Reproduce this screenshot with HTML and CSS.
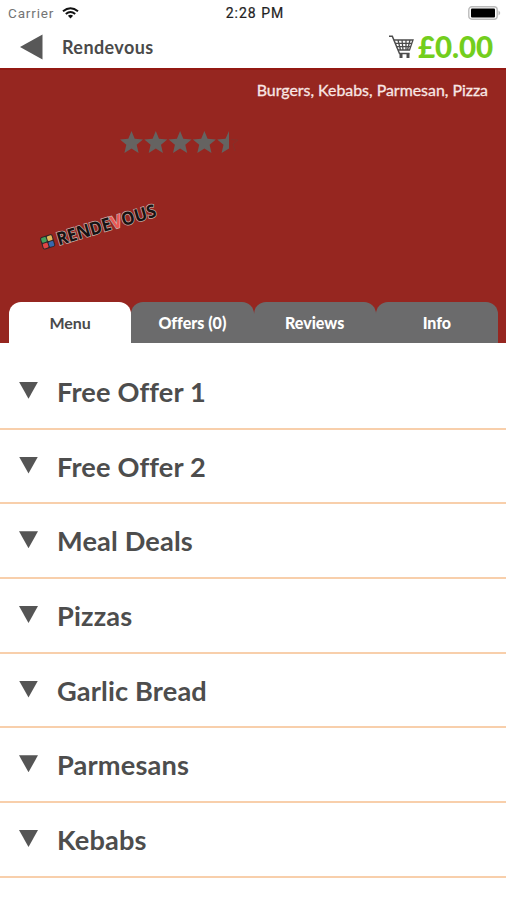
FILE: index.html
```html
<!DOCTYPE html>
<html lang="en">
<head>
<meta charset="utf-8">
<title>Rendevous</title>
<link rel="stylesheet" href="styles.css">
</head>
<body>
<div class="status">
  <div class="carrier"><span>Carrier</span>
    <svg class="wifi" width="17" height="12" viewBox="0 0 17 12"><g fill="none" stroke="#111" stroke-width="2"><path d="M1 4.3Q8.500-1.900 16 4.300"/><path d="M3.800 7Q8.500 3 13.200 7"/></g><path d="M8.500 11.600L5.900 8.800Q8.500 6.900 11.100 8.800Z" fill="#111"/></svg>
  </div>
  <time class="clock">2:28 PM</time>
  <svg class="battery" width="33" height="14" viewBox="0 0 33 14"><rect x=".8" y=".8" width="28.400" height="12.400" rx="3" fill="#fff" stroke="#bbb" stroke-width="1.400"/><rect x="3" y="2.500" width="24" height="9" rx="1" fill="#000"/><path d="M30.500 4.500Q34 7 30.500 9.500Z" fill="#bbb"/></svg>
</div>
<header class="bar">
  <svg class="back" width="23" height="26" viewBox="0 0 23 26"><path d="M0 13L22.500 .5V25.500Z" fill="#585858"/></svg>
  <h1 class="title">Rendevous</h1>
  <svg class="cart" width="25" height="24" viewBox="0 0 25 24"><g fill="none" stroke="#4c4c4c" stroke-width="1.500"><path d="M0 1.200H3.300L10.500 18.500H20.500"/><path d="M4.800 5H24L20.500 15H9M6 8.300H23M7 11.600H21.800M9 5L11.500 15M13 5L14 15M17 5V15M21 5L18.500 15" stroke-width="1.300"/></g><path d="M10.500 18.500H13.500V23H10.500ZM17.500 18.500H20.500V23H17.500Z" fill="#4c4c4c"/></svg>
  <span class="total">£0.00</span>
</header>
<section class="hero">
  <p class="cuisines">Burgers, Kebabs, Parmesan, Pizza</p>
  <svg class="stars" width="120" height="24" viewBox="0 0 120 24">
    <defs><path id="star" d="M11.500 0L14.700 7.700L23 8.400L16.700 13.800L18.600 22L11.500 17.600L4.400 22L6.300 13.800L0 8.400L8.300 7.700Z"/></defs>
    <g fill="#656361"><use href="#star"/><use href="#star" x="24.300"/><use href="#star" x="48.600"/><use href="#star" x="72.900"/><path d="M109 0V17.500L101.600 22L103.500 13.800L97.200 8.400L105.500 7.700Z"/></g>
    <path d="M111 8.500L118 9L113 13L115 20" fill="none" stroke="#85302a" stroke-width="1"/>
  </svg>
  <svg class="logo" width="130" height="60" viewBox="0 0 130 60">
    <g transform="translate(7 53) rotate(-16.500)">
      <rect x="0" y="-12" width="13" height="13" rx="2" fill="#302629"/>
      <rect x="1" y="-11" width="5" height="5" rx="1" fill="#45a05c"/><rect x="7" y="-11" width="5" height="5" rx="1" fill="#e2b65b"/>
      <rect x="1" y="-5" width="5" height="5" rx="1" fill="#e14645"/><rect x="7" y="-5" width="5" height="5" rx="1" fill="#3668af"/>
      <text class="logo-text" x="16" y="1" textLength="103" lengthAdjust="spacingAndGlyphs">RENDE<tspan class="logo-v">V</tspan>OUS</text>
    </g>
  </svg>
  <nav class="tabs">
    <a class="tab active">Menu</a><a class="tab">Offers (0)</a><a class="tab">Reviews</a><a class="tab">Info</a>
  </nav>
</section>
<ul class="menu">
  <li><i class="arrow"></i>Free Offer 1</li>
  <li><i class="arrow"></i>Free Offer 2</li>
  <li><i class="arrow"></i>Meal Deals</li>
  <li><i class="arrow"></i>Pizzas</li>
  <li><i class="arrow"></i>Garlic Bread</li>
  <li><i class="arrow"></i>Parmesans</li>
  <li><i class="arrow"></i>Kebabs</li>
</ul>
</body>
</html>
```
FILE: styles.css
```css
* { box-sizing: border-box; }
body { margin: 0; height: 900px; overflow: hidden; background: #fff; color: #4d4d4d; font-family: Lato, sans-serif; }
.status { display: grid; grid-template-columns: 1fr auto 1fr; align-items: center; height: 26px; padding: 0 5px 0 8px; font: 13.500px Roboto, sans-serif; }
.carrier { display: flex; align-items: center; gap: 7px; color: #747474; letter-spacing: .85px; }
.carrier span { width: 47px; }
.wifi { display: block; }
.clock { color: #222; letter-spacing: 1px; font-size: 14px; margin-left: 1px; -webkit-text-stroke: .2px #222; }
.battery { justify-self: end; }
.bar { display: flex; align-items: center; height: 42px; padding: 0 13px 0 20px; }
.title { margin: 0 auto 0 19px; font-size: 18px; line-height: 22px; font-weight: 700; color: #4a4a4a; letter-spacing: .4px; }
.cart { margin-right: 4px; }
.total { color: #73ce1d; font-size: 29.500px; line-height: 32px; font-weight: 900; letter-spacing: -.1px; }
.hero { display: flex; flex-direction: column; height: 275px; background: #962620; border-top: 2px solid #941913; }
.cuisines { margin: 10px 18px 0 0; text-align: right; color: #f8e7e5; font-size: 15.900px; line-height: 20px; -webkit-text-stroke: .3px #f8e7e5; }
.stars { margin: 31px 0 0 120px; flex: none; }
.logo { margin: 41px 0 0 36px; flex: none; }
.logo-text { font: 700 18px "Open Sans", sans-serif; fill: #171313; stroke: #c6aaa5; stroke-width: 1.5px; paint-order: stroke; }
.logo-v { fill: #ee5754; }
.tabs { display: flex; margin: auto 8px 0 9px; }
.tab { flex: 1; height: 41px; border-radius: 12px 12px 0 0; background: #6b6b6c; color: #fff; text-align: center; font-size: 16px; line-height: 41px; font-weight: 900; font-variant-ligatures: none; }
.active { background: #fff; color: #4a4a4a; font-weight: 700; }
.menu { list-style: none; margin: 0; padding: 12px 0 0; }
.menu li { display: flex; align-items: center; height: 74.7px; padding: 0 0 0 19px; border-bottom: 2px solid #f8cfab; font-size: 27.200px; font-weight: 700; letter-spacing: .15px; font-variant-ligatures: none; }
.arrow { width: 19px; height: 17px; margin: -2px 19px 0 0; background: #555; clip-path: polygon(0 0, 100% 0, 50% 100%); }
```
